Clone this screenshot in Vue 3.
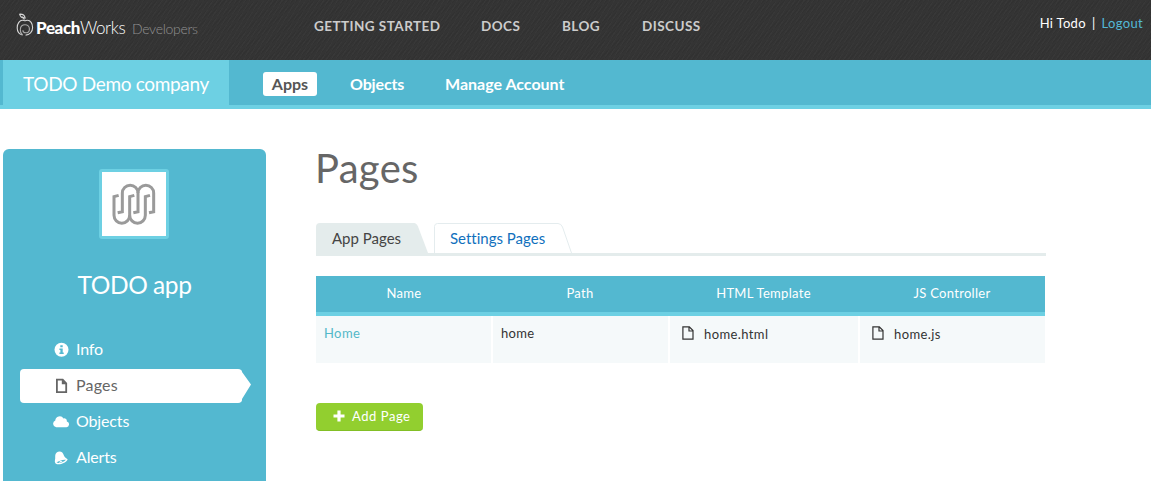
<script setup>
const topLinks = [
  { label: 'GETTING STARTED', cls: 'start' },
  { label: 'DOCS', cls: 'docs' },
  { label: 'BLOG', cls: 'blog' },
  { label: 'DISCUSS', cls: 'discuss' },
]
const menu = [
  { label: 'Info', icon: 'info' },
  { label: 'Pages', icon: 'file', active: true },
  { label: 'Objects', icon: 'cloud' },
  { label: 'Alerts', icon: 'bell' },
]
const columns = ['Name', 'Path', 'HTML Template', 'JS Controller']
</script>

<template>
  <div class="page">
    <header class="top">
      <a class="brand">
        <svg class="peach" viewBox="0 0 18 24" fill="none" stroke="#d6d6d6" stroke-width="1.1">
          <path d="M8.3 6.6C7.9 5 7.3 4.300 6.300 3.600" />
          <path d="M3.600 1.200C6.200 1 8.600 2.200 9.200 5C6.600 5.300 4.300 4 3.600 1.200Z" />
          <path d="M6.500 22C3.300 21.200 1.200 18.300 1.200 14.700C1.200 10.500 3.700 7.200 6.500 7.200C7.700 7.200 8.300 7.800 9 7.800C9.700 7.800 10.300 7.200 11.500 7.200C14.400 7.200 16.600 10.500 16.600 14.500C16.600 19 13.500 22.100 9.600 22.100" />
          <path d="M6.500 22C5 20.500 4.100 18.400 4.300 16.200C4.500 13.600 6.500 11.700 9 11.700C11.500 11.700 13.400 13.500 13.400 15.900C13.400 18.200 11.700 19.800 9.700 19.800C8 19.800 6.900 18.600 6.900 17.200" stroke="#aaa" />
        </svg>
        <span class="peachtext"><b>Peach</b><span class="works">Works</span></span>
        <span class="dev">Developers</span>
      </a>
      <nav class="topnav">
        <a v-for="l in topLinks" :key="l.label" :class="l.cls">{{ l.label }}</a>
      </nav>
      <div class="user"><span class="hi">Hi Todo</span><span class="bar">|</span><a>Logout</a></div>
    </header>

    <div class="sub">
      <div class="company"><span>TODO Demo company</span></div>
      <nav class="subnav">
        <a class="on">Apps</a>
        <a class="objects">Objects</a>
        <a class="manage">Manage Account</a>
      </nav>
    </div>

    <main class="body">
      <aside class="side">
        <div class="logo">
          <svg viewBox="0 0 192 192" fill="none" stroke="#9a9a9a" stroke-width="9">
            <path d="M50 70L36 74V130A23.500 23.500 0 0 0 83 130V74L97 70" />
            <path d="M83 130A23.500 23.500 0 0 0 130 130V74L144 70" />
            <path d="M47 122L61 119V63A23.500 23.500 0 0 1 108 63V119L94 122" />
            <path d="M108 63A23.500 23.500 0 0 1 155 63V119L141 122" />
          </svg>
        </div>
        <h2>TODO app</h2>
        <ul>
          <li v-for="m in menu" :key="m.label" :class="{ active: m.active }">
            <svg v-if="m.icon === 'info'" class="ic" viewBox="0 0 16 16">
              <circle cx="8.500" cy="7.800" r="7" fill="#fff" />
              <path d="M7.300 3.300h2.400v2H7.300zM6.400 6.500h3.300v4h1V12H6.400v-1.500h1V8H6.400z" fill="#53b8d0" />
            </svg>
            <svg v-else-if="m.icon === 'file'" class="ic" viewBox="0 0 16 16">
              <path d="M3.900 1.700h5.800l3.500 3.700v8.700H3.900z" fill="none" stroke="#666" stroke-width="1.800" />
              <path d="M8.800 1.300v5h4.900z" fill="#666" />
            </svg>
            <svg v-else-if="m.icon === 'cloud'" class="ic" viewBox="0 0 16 16">
              <path d="M3.200 13.200A3.500 3.500 0 0 1 2.300 6.500A4.400 4.400 0 0 1 10.500 4.500A2.600 2.600 0 0 1 13.800 7.500A2.900 2.900 0 0 1 13.500 13.200Z" fill="#fff" />
            </svg>
            <svg v-else class="ic" viewBox="0 0 16 16">
              <path d="M2.600 13.500C1.400 12 1.900 10.500 2.200 8.500C2.300 5.500 1.900 4.200 3.700 2.500C5.200 1.200 7.800 1 9.300 2.600C11 4.600 10.700 6.600 12.800 8C14.700 9.100 15.100 9.200 14.200 10.200C12.500 12.800 6 15.800 2.600 13.500Z" fill="#fff" />
              <path d="M3.500 12.600C5.500 10.900 9.500 9.400 12.900 9.700C11 12 6.500 13.600 3.500 12.600Z" fill="#53b8d0" />
              <path d="M5.900 12.800C6.600 10.900 8.500 10.400 9.700 11.700Z" fill="#fff" />
            </svg>
            <span>{{ m.label }}</span>
            <svg v-if="m.active" class="arrow" viewBox="0 0 10 34"><path d="M0 1L1 3L10 15.500L1 30L0 33Z" fill="#fff" /></svg>
          </li>
        </ul>
      </aside>

      <section class="content">
        <h1>Pages</h1>
        <div class="tabs">
          <div class="tab first">
            <svg viewBox="0 0 112 33"><path d="M0 33V4Q0 0 4 0H98Q100.500 0 102 3.500L112 30V33Z" fill="#e4ecec" /></svg>
            <span>App Pages</span>
          </div>
          <div class="tab second">
            <svg viewBox="0 0 138 33"><path d="M.5 33V3.500Q.5 .5 3.500 .5H124Q127 .5 128.500 4L137.500 30V33Z" fill="#fff" /><path d="M.5 33V3.500Q.5 .5 3.500 .5H124Q127 .5 128.500 4L137.500 30" fill="none" stroke="#e4ecee" /><path d="M0 30H138V33H0Z" fill="#e4ecec" /></svg>
            <span>Settings Pages</span>
          </div>
        </div>
        <table>
          <colgroup><col class="c1"><col class="c2"><col class="c3"><col class="c4"></colgroup>
          <thead>
            <tr><th v-for="c in columns" :key="c"><span>{{ c }}</span></th></tr>
          </thead>
          <tbody>
            <tr>
              <td><a>Home</a></td>
              <td><span class="path">home</span></td>
              <td v-for="f in ['home.html', 'home.js']" :key="f">
                <div class="file">
                  <svg viewBox="0 0 12 14" fill="none" stroke="#333" stroke-width="1.200"><path d="M.9 .8H7.300L11 4.600V13.200H.9ZM7 .8V5H11" /></svg>
                  <span>{{ f }}</span>
                </div>
              </td>
            </tr>
          </tbody>
        </table>
        <button class="add">
          <svg viewBox="0 0 12 12"><path d="M4.400 .5h3.200v3.900h3.900v3.200H7.600v3.900H4.400V7.600H.5V4.400h3.900z" fill="#fff" /></svg>
          <span>Add Page</span>
        </button>
      </section>
    </main>
  </div>
</template>

<style>
body { margin: 0; background: #fff; overflow: hidden; }
</style>

<style scoped>
.page { width: 1151px; height: 481px; overflow: hidden; font-family: Lato, "Open Sans", sans-serif; color: #333; font-variant-ligatures: none; }
.page * { box-sizing: border-box; white-space: nowrap; }
.top {
  height: 60px; display: flex; align-items: flex-start; padding-left: 16px;
  background: repeating-linear-gradient(135deg, rgba(0,0,0,.05) 0 1px, transparent 1px 3px), repeating-linear-gradient(120deg, rgba(255,255,255,.02) 0 1px, transparent 1px 4px), #343434;
}
.brand { display: flex; width: 298px; color: #fff; }
.peach { width: 18px; height: 24px; margin-top: 13px; }
.peachtext { font-size: 17px; line-height: 24px; margin: 16px 0 0 2px; width: 96px; letter-spacing: -.4px; }
.peachtext b { font-weight: 900; }
.works { font-weight: 300; }
.dev { font-size: 14px; line-height: 20px; margin-top: 19px; color: #929292; font-weight: 300; letter-spacing: -.3px; }
.topnav { display: flex; color: #ccc; font-size: 13.500px; font-weight: 700; line-height: 20px; padding-top: 16px; letter-spacing: .45px; }
.start { width: 167px; }
.docs { width: 81px; }
.blog { width: 80px; }
.user { margin-left: auto; padding: 13px 8px 0 0; font-size: 13px; line-height: 20px; color: #fff; display: flex; letter-spacing: .33px; }
.bar { margin: 0 6px; }
.user a { color: #53b8d6; }
.sub { height: 49px; background: #53b8d0; border-bottom: 4px solid #6dd0e3; display: flex; padding-left: 3px; }
.company { width: 226px; background: #6dd0e3; color: #fff; font-size: 19px; line-height: 48px; padding-left: 20px; letter-spacing: -.33px; }
.subnav { display: flex; align-items: flex-start; padding: 12px 0 0 34px; color: #fff; font-size: 16px; font-weight: 700; line-height: 23px; }
.on { background: #fff; color: #555; border-radius: 3px; width: 54px; height: 24px; text-align: center; }
.objects { margin-left: 33px; width: 95px; letter-spacing: -.15px; }
.body { display: flex; align-items: flex-start; padding: 40px 0 0 3px; }
.side { width: 263px; height: 340px; background: #53b8d0; border-radius: 6px 6px 0 0; padding-top: 20px; }
.logo { width: 70px; height: 70px; border: 3px solid #6dd0e3; border-radius: 3px; background: #fff; margin: 0 auto 0 96px; }
.logo svg { width: 64px; height: 64px; display: block; }
h2 { margin: 30px 0 0; font-size: 24.500px; font-weight: 400; line-height: 32px; text-align: center; color: #fff; letter-spacing: -.45px; }
ul { list-style: none; margin: 32px 0 0; padding: 0 0 0 17px; }
li { display: flex; align-items: center; width: 222px; height: 34px; margin-bottom: 2px; padding-left: 33px; color: #fff; font-size: 16px; border-radius: 4px; position: relative; letter-spacing: -.15px; }
li span { padding-bottom: 3px; }
li.active { background: #fff; color: #666; letter-spacing: .2px; }
.ic { width: 16px; height: 16px; margin-right: 7px; }
.arrow { position: absolute; left: 221px; top: 0; width: 10px; height: 34px; }
.content { margin-left: 50px; width: 730px; }
h1 { margin: -6px 0 0 -1px; font-size: 40px; font-weight: 400; line-height: 50px; color: #666; letter-spacing: .3px; }
.tabs { display: flex; height: 33px; margin-top: 30px; background: linear-gradient(#e4ecec, #e4ecec) 0 100% / 730px 3px no-repeat; }
.tab { display: grid; font-size: 15px; line-height: 31px; }
.tab > * { grid-area: 1 / 1; }
.tab svg { height: 33px; display: block; }
.first { color: #444; }
.first svg { width: 112px; }
.second { margin-left: 6px; color: #1070bd; }
.second svg { width: 138px; }
.tab span { padding-left: 16px; }
table { border-collapse: separate; border-spacing: 0; table-layout: fixed; width: 729px; margin-top: 20px; font-size: 13px; letter-spacing: .3px; }
.c1 { width: 175px; } .c2 { width: 177px; } .c3 { width: 190px; } .c4 { width: 187px; }
th { background: #53b8d0; border-bottom: 4px solid #6dd0e3; color: #fff; font-weight: 400; height: 40px; padding: 0 0 2px 1px; }
td { height: 47px; padding: 8px 0 0 8px; vertical-align: top; background: #f5f9fa; border-left: 2px solid #fff; line-height: 18px; }
td:first-child { border-left: 0; padding-left: 8px; }
td a { color: #53b8c8; letter-spacing: .4px; }
.file { display: flex; align-items: center; padding: 1px 0 0 4px; letter-spacing: .4px; }
.file svg { width: 12px; height: 14px; margin: -2px 10px 0 0; }
.add { display: flex; align-items: center; width: 107px; height: 28px; margin-top: 40px; border: 0; border-bottom: 1px solid #82bf25; border-radius: 4px; background: #92cf2f; color: #fff; padding: 0 0 0 17px; font: 13px Lato, sans-serif; letter-spacing: .55px; }
.add svg { width: 12px; height: 12px; margin: -1px 7px 0 0; }
.add span { padding-bottom: 1px; }
</style>
